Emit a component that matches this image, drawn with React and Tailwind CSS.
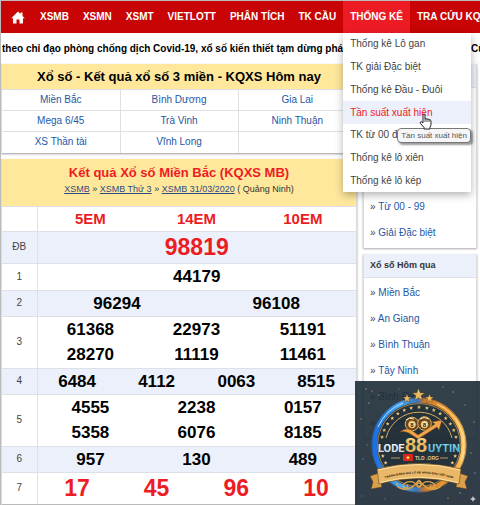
import React from 'react';

const NAV_LEFT = ['XSMB', 'XSMN', 'XSMT', 'VIETLOTT', 'PHÂN TÍCH', 'TK CẦU'];

const STATS_MENU = [
    'Thống kê Lô gan',
    'TK giải Đặc biệt',
    'Thống kê Đầu - Đuôi',
    'Tần suất xuất hiện',
    'TK từ 00 đến 99',
    'Thống kê lô xiên',
    'Thống kê lô kép',
];

const PROVINCES = [
    ['Miền Bắc', 'Bình Dương', 'Gia Lai'],
    ['Mega 6/45', 'Trà Vinh', 'Ninh Thuận'],
    ['XS Thần tài', 'Vĩnh Long', ''],
];

const PRIZES = [
    { label: '', lines: [['5EM', '14EM', '10EM']], style: 'h-[25px] text-[15px] text-[#ed1c24]' },
    { label: 'ĐB', lines: [['98819']], style: 'h-8 text-[23px] text-[#ed1c24]' },
    { label: '1', lines: [['44179']], style: 'h-[27px] text-[17px]' },
    { label: '2', lines: [['96294', '96108']], style: 'h-[26px] text-[17px]' },
    { label: '3', lines: [['61368', '22973', '51191'], ['28270', '11119', '11461']], style: 'h-[26px] text-[17px]' },
    { label: '4', lines: [['6484', '4112', '0063', '8515']], style: 'h-[26px] text-[17px]' },
    { label: '5', lines: [['4555', '2238', '0157'], ['5358', '6076', '8185']], style: 'h-[26px] text-[17px]' },
    { label: '6', lines: [['957', '130', '489']], style: 'h-[26px] text-[17px]' },
    { label: '7', lines: [['17', '45', '96', '10']], style: 'h-8 text-[23px] text-[#ed1c24]' },
];

const starPoints = (cx, cy, r) =>
    Array.from({ length: 10 }, (_, i) => {
        const radius = i % 2 ? r * 0.42 : r;
        const angle = (Math.PI / 5) * i - Math.PI / 2;
        return `${(cx + radius * Math.cos(angle)).toFixed(2)},${(cy + radius * Math.sin(angle)).toFixed(2)}`;
    }).join(' ');

const RING_STARS = [-208, -197, -168, -157, -146, -135, -124, -113, -102, -90, -78, -67, -56, -45, -34, -23, -12, 17, 28];

const DUST = [
    [11, 8, '#c08a6a'], [14, 22, '#7fb0d8'], [6, 38, '#c46a4a'], [24, 14, '#8ea2b0'], [98, 11, '#b0a080'], [110, 24, '#7a8c98'],
    [119, 41, '#b08a50'], [8, 78, '#3f8de0'], [12, 64, '#5a7fae'], [116, 72, '#9a8860'], [30, 118, '#4d78c0'], [93, 117, '#c08040'],
    [120, 92, '#8b97a0'], [7, 115, '#3d6fd0'], [17, 10, '#c9744f'], [105, 112, '#8d959c'], [44, 8, '#64717b'], [88, 6, '#5c8ca0'],
];

const HomeIcon = () => (
    <svg viewBox="0 0 14 13" className="w-[14px]" fill="currentColor" aria-hidden="true">
        <path d="M7 0.500 L9.500 3 V1.500 H11.500 V5 L13.800 7.300 H12 V12.500 H8.500 V8.500 H5.500 V12.500 H2 V7.300 H0.200Z" />
    </svg>
);

const Logo = () => (
    <svg viewBox="0 0 125 125" className="block w-full" role="img" aria-label="LODE88UYTIN">
        <defs>
            <linearGradient id="ring" x1="0" x2="1" y1="0" y2="0">
                <stop offset="0" stopColor="#1c6fe0" />
                <stop offset="0.3" stopColor="#4aa8f0" />
                <stop offset="0.48" stopColor="#3c74b8" />
                <stop offset="0.56" stopColor="#c87a2c" />
                <stop offset="0.85" stopColor="#f29a2e" />
                <stop offset="1" stopColor="#ffc766" />
            </linearGradient>
            <linearGradient id="gold" x1="0" x2="0" y1="0" y2="1">
                <stop offset="0" stopColor="#fdeaa4" />
                <stop offset="0.5" stopColor="#e8b455" />
                <stop offset="1" stopColor="#f3c978" />
            </linearGradient>
            <linearGradient id="silver" x1="0" x2="0" y1="0" y2="1">
                <stop offset="0" stopColor="#ffffff" />
                <stop offset="1" stopColor="#c9d0d8" />
            </linearGradient>
            <linearGradient id="cyan" x1="0" x2="0" y1="0" y2="1">
                <stop offset="0" stopColor="#8be6f4" />
                <stop offset="1" stopColor="#3a9fd0" />
            </linearGradient>
            <path id="ribbonText" d="M25 99 Q64 86 103 99" />
        </defs>

        {DUST.map(([x, y, color]) => <circle key={`${x}-${y}`} cx={x} cy={y} r="0.7" fill={color} />)}

        <circle cx="64" cy="64" r="44.5" fill="#17232c" fillOpacity="0.45" stroke="url(#ring)" strokeWidth="4.5" />
        <circle cx="64" cy="64" r="47.3" fill="none" stroke="url(#ring)" strokeWidth="0.8" opacity="0.7" />
        <path d="M23 46 A45 45 0 0 1 48 22" fill="none" stroke="#a9defc" strokeWidth="1" />
        <path d="M82 23 A45 45 0 0 1 106 80" fill="none" stroke="#ffe3a0" strokeWidth="1" />
        <circle cx="64" cy="64" r="41.4" fill="none" stroke="#d9a85c" strokeWidth="0.7" />
        <path d="M31 57 A34 34 0 0 1 97 57" fill="none" stroke="#d9a85c" strokeWidth="1" />
        {RING_STARS.map((deg) => {
            const a = (deg * Math.PI) / 180;
            return <polygon key={deg} points={starPoints(64 + 37.8 * Math.cos(a), 64 + 37.8 * Math.sin(a), 2.1)} fill="#f0c878" />;
        })}

        <g stroke="#4a2c10" strokeWidth="0.4" fill="url(#gold)">
            <polygon points={starPoints(63.5, 14, 6.5)} />
            <polygon points={starPoints(52, 17.5, 4.6)} />
            <polygon points={starPoints(74.5, 17.5, 4.6)} />
        </g>

        {/* lottery balls and arrow */}
        <g stroke="#e9b765" strokeWidth="1">
            <circle cx="57" cy="43" r="6.8" fill="#6b4420" />
            <circle cx="69.5" cy="42.5" r="6.8" fill="#6b4420" />
            <circle cx="57" cy="43.5" r="3.4" fill="#f7e3b0" />
            <circle cx="69.5" cy="43.5" r="3.4" fill="#f7e3b0" />
        </g>
        <path d="M51 39 Q54 36 59 38 M65 38 Q69 35 74 38" fill="none" stroke="#fbe6ad" strokeWidth="1" />
        <text x="57" y="45.7" textAnchor="middle" fontSize="6" fontWeight="700" fill="#2b1a0c">8</text>
        <text x="69.5" y="45.7" textAnchor="middle" fontSize="6" fontWeight="700" fill="#2b1a0c">8</text>
        <path d="M45 51 Q52 45 59 51 L63 54 L80 43 L77 41 L87 39 L84 49 L82 46 L63 58 L57 54 Q51 49 45 51Z" fill="#f2a548" stroke="#7a4312" strokeWidth="0.5" />

        <g fontWeight="700">
            <text x="23" y="71" fontSize="11" fontFamily="Roboto, sans-serif" fill="url(#silver)">LODE</text>
            <text x="50" y="71" fontSize="20" fill="url(#gold)">88</text>
            <text x="73" y="71" fontSize="11" fontFamily="Roboto, sans-serif" fill="url(#cyan)">UYTIN</text>
        </g>

        <path d="M36 77 H45 M85 77 H93" stroke="#d9b36c" strokeWidth="0.8" />
        <rect x="48" y="73" width="10" height="7" fill="#d8261c" />
        <polygon points={starPoints(53, 76.6, 2.2)} fill="#ffe14a" />
        <text x="60" y="79" fontSize="5" fontWeight="700" fill="#e2c48c">TLD .ORG</text>

        <g fill="none" stroke="#dca34c" strokeWidth="1.3">
            <path d="M64 106 Q58 98 50 102 Q46 106 51 107 Q54 106 52 104 M64 106 Q70 98 78 102 Q82 106 77 107 Q74 106 76 104" />
            <path d="M64 99 Q56 110 48 108 Q41 107 42 102 M64 99 Q72 110 80 108 Q87 107 86 102" />
            <circle cx="64" cy="104" r="2" />
        </g>
        <path d="M24 92 L15 95 L18 101 L16 108 L27 106Z M104 92 L113 95 L110 101 L112 108 L101 106Z" fill="#d9a04c" stroke="#5d3a14" strokeWidth="0.5" />
        <path d="M22 88 Q64 77 106 88 L104 103 Q64 92 24 103Z" fill="#eab868" stroke="#6f4718" strokeWidth="0.6" />
        <path d="M23 89 Q64 78 105 89 M25 101.500 Q64 91 103 101.500" fill="none" stroke="#fff0bd" strokeWidth="0.7" />
        <text fontSize="3" fontWeight="700" fill="#2a1808">
            <textPath href="#ribbonText" startOffset="50%" textAnchor="middle">TRANG ĐÁNH GIÁ LÔ ĐỀ HÀNG ĐẦU VIỆT NAM</textPath>
        </text>
        <path d="M118 115 L119 117 L121 118 L119 119 L118 121 L117 119 L115 118 L117 117Z" fill="#c3c9cc" />
    </svg>
);

const HandCursor = () => (
    <svg viewBox="0 0 14 17" className="absolute left-[76px] top-[80px] z-20 w-[14px]" aria-hidden="true">
        <path
            d="M4 1.500 Q5 0.500 6 1.500 V6 Q7 5.200 8 6.200 Q9.200 5.600 10 6.800 Q11.200 6.300 12 7.600 V11 Q12 13 11 14.200 V16 H5 V14.500 L1.300 10.200 Q0.800 8.800 2.200 8.600 L4 10Z"
            fill="#fff"
            stroke="#222"
            strokeWidth="1"
        />
        <path d="M6 6 V9 M8 6.500 V9 M10 7 V9" stroke="#222" strokeWidth="0.8" />
    </svg>
);

const Navbar = () => (
    <nav className="flex h-8 items-stretch whitespace-nowrap bg-[#c80404] text-[10px] font-bold leading-[14px] text-white">
        <a href="#" aria-label="Trang chủ" className="flex items-center pl-[10px] pr-2">
            <HomeIcon />
        </a>
        {NAV_LEFT.map((item) => (
            <a key={item} href="#" className="flex items-center px-[7px]">{item}</a>
        ))}
        <div className="relative flex bg-[#ed1c24]">
            <a href="#" className="flex items-center px-[7px]">THỐNG KÊ</a>
            <ul className="absolute left-0 top-full z-10 flex h-[159px] w-32 flex-col bg-white font-normal text-[#444] shadow-[0_3px_8px_rgba(0,0,0,0.3)]">
                {STATS_MENU.map((item, i) => (
                    <li key={item} className="flex-1">
                        <a href="#" className={`flex h-full items-center px-[7px] ${i === 3 ? 'bg-[#ebf0fa] text-[#ed1c24]' : ''}`}>{item}</a>
                    </li>
                ))}
                <li
                    role="tooltip"
                    className="absolute left-[54px] top-[95px] z-10 rounded-sm border border-[#777] bg-[#f6f6f8] px-[3px] text-[8px] leading-[13px] text-[#555] shadow-[2px_2px_2px_rgba(0,0,0,0.4)]"
                >
                    Tần suất xuất hiện
                </li>
                <HandCursor />
            </ul>
        </div>
        <a href="#" className="flex items-center px-[7px]">TRA CỨU KQ</a>
    </nav>
);

const ProvinceBox = () => (
    <section className="border-x border-[#ddd] bg-white shadow-[0_1px_2px_rgba(0,0,0,0.4)]">
        <h2 className="bg-[#ffe89c] text-center text-[13px] font-bold leading-[25px]">Xổ số - Kết quả xổ số 3 miền - KQXS Hôm nay</h2>
        <table className="w-full table-fixed text-center text-[10px] leading-[14px] text-[#2457a5]">
            <tbody>
                {PROVINCES.map((row) => (
                    <tr key={row[0]} className="h-[21px] border-t border-[#e0e0e0]">
                        {row.map((name, i) => (
                            <td key={i} className="border-l border-[#e0e0e0] first:border-l-0">
                                {name && <a href="#">{name}</a>}
                            </td>
                        ))}
                    </tr>
                ))}
            </tbody>
        </table>
    </section>
);

const ResultBox = () => (
    <section className="border-x border-[#ddd] bg-white shadow-[0_1px_2px_rgba(0,0,0,0.4)]">
        <header className="bg-[#ffe89c] pb-[10px] pt-[5px] text-center">
            <h1 className="text-[13px] font-bold leading-[18px] text-[#ed1c24]">Kết quả Xổ số Miền Bắc (KQXS MB)</h1>
            <p className="text-[9px] leading-[14px] text-[#333]">
                <a href="#" className="text-[#2d4d80] underline">XSMB</a> » <a href="#" className="text-[#2d4d80] underline">XSMB Thứ 3</a> »{' '}
                <a href="#" className="text-[#2d4d80] underline">XSMB 31/03/2020</a> ( Quảng Ninh)
            </p>
        </header>
        <table className="w-full table-fixed text-center leading-none">
            <colgroup>
                <col className="w-[35px]" />
                {Array.from({ length: 12 }, (_, i) => <col key={i} />)}
            </colgroup>
            {PRIZES.map((prize, p) => (
                <tbody key={p} className={`border-t border-[#dde0e6] ${p % 2 ? 'bg-[#ebf0fa]' : ''}`}>
                    {prize.lines.map((line, l) => (
                        <tr key={l} className={`font-bold ${prize.style}`}>
                            {l === 0 && (
                                <th rowSpan={prize.lines.length} className="border-r border-[#dde0e6] text-[10px] font-normal text-[#444]">
                                    {prize.label}
                                </th>
                            )}
                            {line.map((num, i) => (
                                <td key={i} colSpan={12 / line.length}>{num}</td>
                            ))}
                        </tr>
                    ))}
                </tbody>
            ))}
        </table>
    </section>
);

const SideBox = ({ title, links }) => (
    <section className="border-x border-[#ddd] bg-white pb-[2px] shadow-[0_1px_2px_rgba(0,0,0,0.35)]">
        <h3 className="h-6 border-b border-[#dde0e6] bg-[#ebf0fa] px-[6px] text-[9px] font-bold leading-[23px] text-[#333]">{title}</h3>
        <ul className="pt-[2px] text-[10px] leading-[26px] text-[#444]">
            {links.map((link) => (
                <li key={link} className="px-[6px]">
                    » <a href="#" className="text-[#2457a5]">{link}</a>
                </li>
            ))}
        </ul>
    </section>
);

export default function App() {
    return (
        <div className="relative overflow-hidden border-l border-t border-[#bbb] bg-white pb-[2px] font-['Liberation_Sans',Arial,sans-serif] text-black">
            <Navbar />
            <div className="flex h-[31px] items-center overflow-hidden whitespace-nowrap pl-px text-[10px] font-bold">
                <p className="flex-1 overflow-hidden">theo chỉ đạo phòng chống dịch Covid-19, xổ số kiến thiết tạm dừng phát</p>
                <p className="w-[9px]">Cù</p>
            </div>
            <div className="flex items-start gap-[6px] pr-[3px]">
                <main className="flex min-w-0 flex-1 flex-col gap-[6px]">
                    <ProvinceBox />
                    <ResultBox />
                </main>
                <aside className="flex w-[114px] flex-col gap-[6px]">
                    <SideBox title="Thống kê" links={['Lô gan', 'Đầu - Đuôi', 'Tần suất', 'Lô xiên', 'Từ 00 - 99', 'Giải Đặc biệt']} />
                    <SideBox title="Xổ số Hôm qua" links={['Miền Bắc', 'An Giang', 'Bình Thuận', 'Tây Ninh', 'Bình Định', 'Quảng Trị']} />
                </aside>
            </div>
            <div className="absolute bottom-0 right-0 z-20 w-[125px] bg-gradient-to-b from-[#1c2c36]/90 to-[#26323e]/95">
                <Logo />
            </div>
        </div>
    );
}
